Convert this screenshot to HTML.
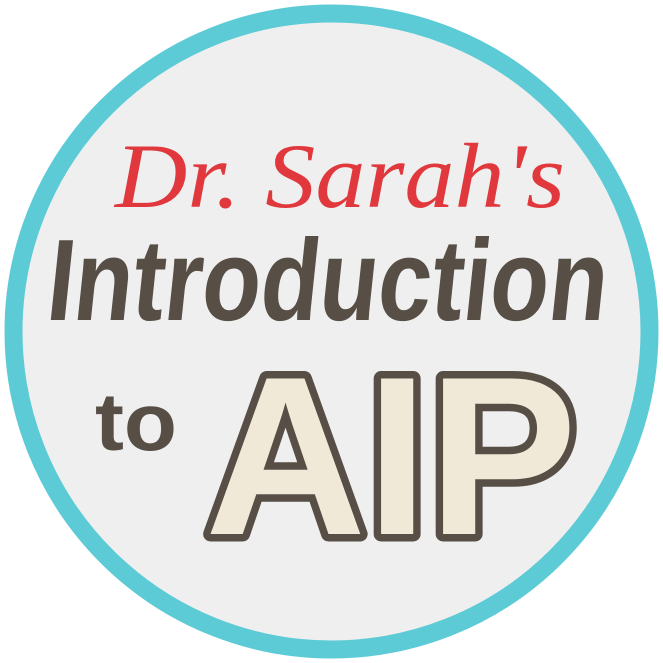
<!DOCTYPE html>
<html><head><style>
html,body{margin:0;padding:0;background:#fff;width:663px;height:663px;overflow:hidden}
</style></head><body>
<svg width="663" height="663" viewBox="0 0 663 663" xmlns="http://www.w3.org/2000/svg">
<circle cx="331.5" cy="331.5" r="318" fill="#efefef" stroke="#5ccbd6" stroke-width="18"/>
<text x="115" y="207" font-family="Liberation Serif, serif" font-style="italic" font-size="92" fill="#e0383d" textLength="450" lengthAdjust="spacingAndGlyphs">Dr. Sarah's</text>
<text x="45" y="320" font-family="Liberation Sans, sans-serif" font-weight="bold" font-size="116" fill="#574f45" textLength="560" lengthAdjust="spacingAndGlyphs" transform="skewX(-6) translate(33,0)">Introduction</text>
<text x="95" y="450" font-family="Liberation Sans, sans-serif" font-weight="bold" font-size="82" fill="#574f45" textLength="82" lengthAdjust="spacingAndGlyphs">to</text>
<text x="205" y="534" font-family="Liberation Sans, sans-serif" font-weight="bold" font-size="226" fill="#f1e9d8" stroke="#574f45" stroke-width="15" stroke-linejoin="round" paint-order="stroke" textLength="372" lengthAdjust="spacingAndGlyphs">AIP</text>
</svg>
</body></html>
